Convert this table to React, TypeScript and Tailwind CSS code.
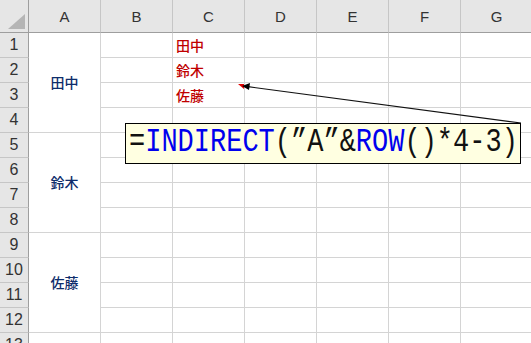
const COLS = ['A', 'B', 'C', 'D', 'E', 'F', 'G'];
const ROWS = Array.from({ length: 13 }, (_, i) => i + 1);

const merged: Record<number, string> = { 1: '田中', 5: '鈴木', 9: '佐藤' };
const colC: Record<number, string> = { 1: '田中', 2: '鈴木', 3: '佐藤' };

const jp = "font-['Noto_Sans_CJK_JP',sans-serif] font-medium";

function HeaderRow() {
    return (
        <>
            <div className="relative bg-[#e6e6e6] border-r border-b border-r-[#9e9e9e] border-b-[#9e9e9e]">
                <svg className="absolute right-[3px] bottom-[3px]" width="17" height="15" viewBox="0 0 17 15">
                    <polygon points="17,0 17,15 0,15" fill="#b5b5b5" />
                </svg>
            </div>
            {COLS.map((c) => (
                <div
                    key={c}
                    className="flex items-center justify-center bg-[#e6e6e6] border-r border-b border-r-[#c6c6c6] border-b-[#9e9e9e] text-[15px] text-[#333] font-['Liberation_Sans',sans-serif] pt-[2px]"
                >
                    {c}
                </div>
            ))}
        </>
    );
}

function Row({ n }: { n: number }) {
    return (
        <>
            <div className="flex items-center justify-center bg-[#e6e6e6] border-r border-b border-r-[#9e9e9e] border-b-[#c6c6c6] text-[16px] text-[#333] font-['Liberation_Sans',sans-serif]">
                {n}
            </div>
            {(n - 1) % 4 === 0 && n < 13 ? (
                <div
                    className={`row-span-4 flex items-center justify-center bg-white border-r border-b border-[#d4d4d4] text-[14px] text-[#0e2d6b] ${jp}`}
                >
                    {merged[n]}
                </div>
            ) : n === 13 ? (
                <div className="bg-white border-r border-b border-[#d4d4d4]" />
            ) : null}
            {COLS.slice(1).map((c) => (
                <div
                    key={c}
                    className={`flex items-center px-[3px] bg-white border-r border-b border-[#d4d4d4] text-[14px] text-[#c00000] ${jp}`}
                >
                    {c === 'C' ? colC[n] : null}
                </div>
            ))}
        </>
    );
}

export default function App() {
    return (
        <div className="relative w-[531px] h-[343px] overflow-hidden bg-white">
            <div className="grid grid-cols-[29px_repeat(7,72px)] grid-rows-[33px_repeat(13,25px)]">
                <HeaderRow />
                {ROWS.map((n) => (
                    <Row key={n} n={n} />
                ))}
            </div>

            <svg className="absolute inset-0 pointer-events-none" width="531" height="343">
                <polygon points="238,84 244,84 244,89" fill="#e00000" />
                <line x1="521" y1="123" x2="248" y2="86.7" stroke="#111" strokeWidth="1.2" />
                <polygon points="242,86 250,83 249,90" fill="#000" />
            </svg>

            <div className="absolute left-[125px] top-[123px] w-[396px] h-[41px] flex items-center pl-[3px] bg-[#ffffe1] border border-black whitespace-nowrap text-[27px] leading-none font-['Liberation_Mono',monospace] text-[#111]">
                <span className="inline-block scale-y-[1.2]">
                    =<span className="text-[#0000ee]">INDIRECT</span>(”A”&amp;
                    <span className="text-[#0000ee]">ROW</span>()*4-3)
                </span>
            </div>
        </div>
    );
}
